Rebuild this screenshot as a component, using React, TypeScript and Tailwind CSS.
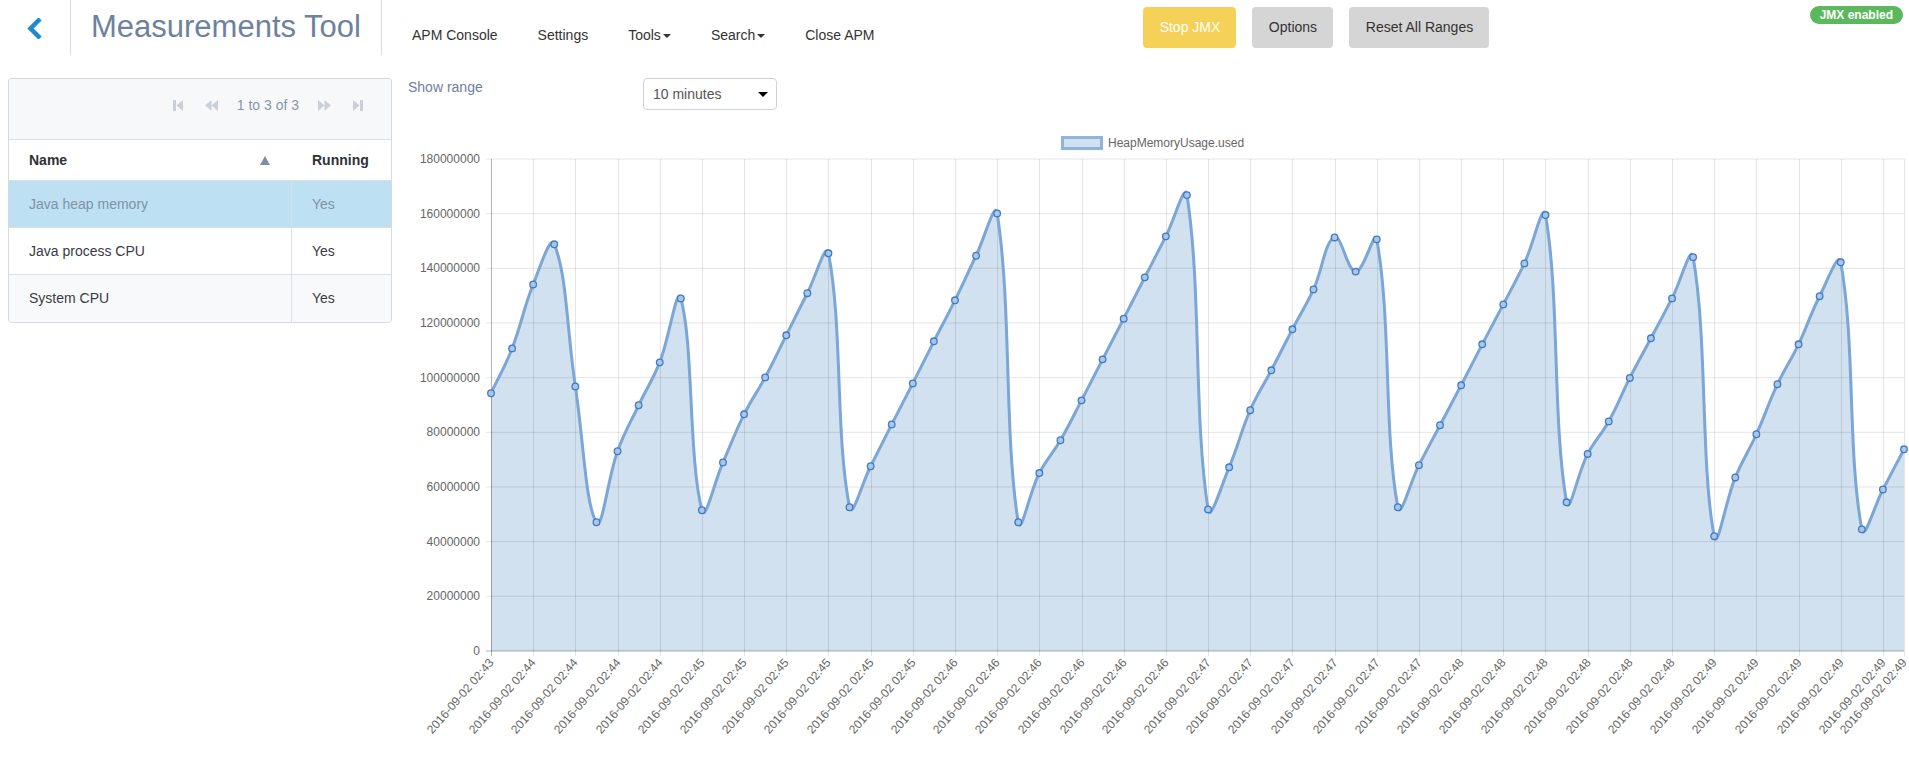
import React from 'react';

// HeapMemoryUsage.used in millions, one sample every 5 seconds
const VALUES = [
  94.3, 110.7, 134.1, 148.8, 96.8, 47.1, 73.1, 89.9, 105.6, 129.0, 51.5, 69.0, 86.6, 100.1, 115.5, 130.9, 145.5,
  52.6, 67.6, 82.9, 97.9, 113.3, 128.3, 144.6, 160.1, 47.1, 65.1, 77.1, 91.7, 106.7, 121.6, 136.7, 151.7, 166.8,
  51.8, 67.2, 88.1, 102.7, 117.7, 132.3, 151.3, 138.8, 150.6, 52.6, 68.0, 82.6, 97.2, 112.2, 126.8, 141.8, 159.5,
  54.4, 72.1, 84.0, 99.9, 114.4, 129.0, 144.1, 42.0, 63.5, 79.3, 97.6, 112.2, 129.8, 142.2, 44.5, 59.1, 73.8,
];

const MINUTES = [
  '43',
  '44', '44', '44', '44',
  '45', '45', '45', '45', '45', '45',
  '46', '46', '46', '46', '46', '46',
  '47', '47', '47', '47', '47', '47',
  '48', '48', '48', '48', '48', '48',
  '49', '49', '49', '49', '49', '49',
];

const LEFT = 491;
const RIGHT = 1904;
const TOP = 159;
const BOTTOM = 651;
const MAX = 180;
const STEP = (RIGHT - LEFT) / (VALUES.length - 1);

type Pt = { x: number; y: number };

function splineCurve(p0: Pt, p1: Pt, p2: Pt, t: number) {
  const d01 = Math.hypot(p1.x - p0.x, p1.y - p0.y);
  const d12 = Math.hypot(p2.x - p1.x, p2.y - p1.y);
  let s01 = d01 / (d01 + d12);
  let s12 = d12 / (d01 + d12);
  if (isNaN(s01)) s01 = 0;
  if (isNaN(s12)) s12 = 0;
  const fa = t * s01;
  const fb = t * s12;
  return {
    prev: { x: p1.x - fa * (p2.x - p0.x), y: p1.y - fa * (p2.y - p0.y) },
    next: { x: p1.x + fb * (p2.x - p0.x), y: p1.y + fb * (p2.y - p0.y) },
  };
}

const cap = (p: Pt): Pt => ({
  x: Math.min(RIGHT, Math.max(LEFT, p.x)),
  y: Math.min(BOTTOM, Math.max(TOP, p.y)),
});

function buildPath() {
  const pts: Pt[] = VALUES.map((v, i) => ({ x: LEFT + i * STEP, y: BOTTOM - (v / MAX) * (BOTTOM - TOP) }));
  const ctrl = pts.map((p, i) => {
    const c = splineCurve(pts[i - 1] || p, p, pts[i + 1] || p, 0.4);
    return { prev: cap(c.prev), next: cap(c.next) };
  });
  let d = `M${pts[0].x},${pts[0].y}`;
  for (let i = 1; i < pts.length; i++) {
    const a = ctrl[i - 1].next;
    const b = ctrl[i].prev;
    d += ` C${a.x},${a.y} ${b.x},${b.y} ${pts[i].x},${pts[i].y}`;
  }
  return { pts, d };
}

function HeapChart() {
  const { pts, d } = buildPath();
  const area = `${d} L${RIGHT},${BOTTOM} L${LEFT},${BOTTOM} Z`;
  const yTicks = [0, 20, 40, 60, 80, 100, 120, 140, 160, 180];
  const labelIdx = [...Array.from({ length: 34 }, (_, k) => k * 2), 67];

  return (
    <svg width={1511} height={662} viewBox="398 120 1511 662" className="block" style={{ fontFamily: '"Liberation Sans", Arial, sans-serif' }}>
      {/* legend */}
      <rect x={1062.5} y={137.5} width={39} height={11} fill="#d2e1f0" stroke="#8fb3db" strokeWidth={3} />
      <text x={1108} y={147} fontSize={12} fill="#666">HeapMemoryUsage.used</text>

      {/* area */}
      <path d={area} fill="#d2e1f0" />

      {/* horizontal grid + y labels */}
      {yTicks.map((t) => {
        const y = BOTTOM - (t / MAX) * (BOTTOM - TOP);
        return (
          <g key={t}>
            <line x1={486} x2={RIGHT} y1={y} y2={y} stroke={t === 0 ? 'rgba(0,0,0,0.3)' : 'rgba(0,0,0,0.1)'} strokeWidth={1} />
            <text x={480} y={y + 4} fontSize={12} fill="#666" textAnchor="end">{t === 0 ? '0' : `${t}000000`}</text>
          </g>
        );
      })}

      {/* vertical grid + x labels */}
      {labelIdx.map((i, k) => {
        const x = Math.round(LEFT + i * STEP) + 0.5;
        return (
          <g key={i}>
            <line x1={x} x2={x} y1={TOP} y2={BOTTOM + 5} stroke={i === 0 ? 'rgba(0,0,0,0.3)' : 'rgba(0,0,0,0.1)'} strokeWidth={1} />
            <text
              fontSize={12}
              fill="#666"
              textAnchor="end"
              transform={`translate(${x + 3},${BOTTOM + 12}) rotate(-49)`}
            >
              2016-09-02 02:{MINUTES[k]}
            </text>
          </g>
        );
      })}

      {/* line */}
      <path d={d} fill="none" stroke="#7ba6d6" strokeWidth={3} />
      {pts.map((p, i) => (
        <circle key={i} cx={p.x} cy={p.y} r={3.3} fill="#a9c6e6" stroke="#3f7cc3" strokeWidth={1.3} />
      ))}
    </svg>
  );
}

function PagerIcon({ kind }: { kind: 'first' | 'prev' | 'next' | 'last' }) {
  const c = '#c9d0d8';
  if (kind === 'first')
    return (
      <svg width="10" height="11" viewBox="0 0 10 11">
        <rect x="0" y="0" width="3" height="11" fill={c} />
        <path d="M10 0 L3.5 5.5 L10 11 Z" fill={c} />
      </svg>
    );
  if (kind === 'last')
    return (
      <svg width="10" height="11" viewBox="0 0 10 11">
        <rect x="7" y="0" width="3" height="11" fill={c} />
        <path d="M0 0 L6.5 5.5 L0 11 Z" fill={c} />
      </svg>
    );
  if (kind === 'prev')
    return (
      <svg width="13" height="11" viewBox="0 0 13 11">
        <path d="M6.5 0 L0 5.5 L6.5 11 Z M13 0 L6.5 5.5 L13 11 Z" fill={c} />
      </svg>
    );
  return (
    <svg width="13" height="11" viewBox="0 0 13 11">
      <path d="M0 0 L6.5 5.5 L0 11 Z M6.5 0 L13 5.5 L6.5 11 Z" fill={c} />
    </svg>
  );
}

const rows = [
  { name: 'Java heap memory', running: 'Yes', selected: true },
  { name: 'Java process CPU', running: 'Yes' },
  { name: 'System CPU', running: 'Yes', striped: true },
];

function Caret() {
  return <span className="ml-[2px] inline-block w-0 h-0 border-l-[4px] border-r-[4px] border-t-[4px] border-l-transparent border-r-transparent border-t-[#333] align-middle" />;
}

export default function App() {
  return (
    <div className="w-[1909px] h-[782px] bg-white overflow-hidden text-[#333]" style={{ fontFamily: '"Liberation Sans", Arial, sans-serif' }}>
      <header className="flex h-[55px]">
        <div className="w-[71px] flex items-center justify-center border-r border-[#dcdcdc]">
          <svg width="16" height="21" viewBox="0 0 16 21" className="ml-[-2px] mt-[1px]">
            <path d="M12.5 2.5 L4.5 10.5 L12.5 18.5" fill="none" stroke="#1b8bd6" strokeWidth="4.5" strokeLinecap="square" />
          </svg>
        </div>
        <div className="w-[311px] border-r border-[#dcdcdc] pl-[20px] pt-[9px]">
          <h1 className="text-[31px] leading-[36px] text-[#6d829e] font-normal">Measurements Tool</h1>
        </div>
        <nav className="flex ml-[10px] pt-[26px] text-[14px] leading-[18px] text-[#333]">
          <span className="px-[20px]">APM Console</span>
          <span className="px-[20px]">Settings</span>
          <span className="px-[20px]">Tools<Caret /></span>
          <span className="px-[20px]">Search<Caret /></span>
          <span className="px-[20px]">Close APM</span>
        </nav>
        <div className="flex gap-[16px] ml-[249px] mt-[7px] self-start text-[14px]">
          <button className="h-[41px] w-[93px] rounded-[4px] bg-[#f6d157] text-white">Stop JMX</button>
          <button className="h-[41px] w-[81px] rounded-[4px] bg-[#d5d5d5] text-[#333]">Options</button>
          <button className="h-[41px] w-[140px] rounded-[4px] bg-[#d5d5d5] text-[#333]">Reset All Ranges</button>
        </div>
        <div className="ml-auto mr-[6px] mt-[6px] self-start h-[18px] px-[10px] rounded-full bg-[#5cb85c] text-white text-[12px] font-bold leading-[18px]">
          JMX enabled
        </div>
      </header>

      <main className="flex mt-[23px]">
        <div className="ml-[8px] w-[384px] self-start border border-[#d7dbe0] rounded-[3px] overflow-hidden text-[14px]">
          <div className="h-[61px] bg-[#f7f8fa] border-b border-[#dcdfe3] flex items-start justify-end pr-[28px] pt-[17px]">
            <div className="flex items-center h-[18px] text-[#8a96a5]">
              <PagerIcon kind="first" />
              <span className="ml-[22px]"><PagerIcon kind="prev" /></span>
              <span className="ml-[19px] text-[14px] leading-[18px]">1 to 3 of 3</span>
              <span className="ml-[19px]"><PagerIcon kind="next" /></span>
              <span className="ml-[22px]"><PagerIcon kind="last" /></span>
            </div>
          </div>
          <div className="flex h-[41px] items-center border-b border-[#dcdfe3] font-bold text-[#2f3136]">
            <div className="w-[283px] pl-[20px] pr-[22px] flex items-center justify-between">
              <span>Name</span>
              <svg width="10" height="9" viewBox="0 0 10 9"><path d="M5 0 L10 9 L0 9 Z" fill="#7d8fa3" /></svg>
            </div>
            <div className="pl-[20px]">Running</div>
          </div>
          {rows.map((r, i) => (
            <div
              key={r.name}
              className={`flex h-[47px] items-center ${i < rows.length - 1 ? 'border-b border-[#dcdfe3]' : ''} ${
                r.selected ? 'bg-[#bde0f2] text-[#8192a6]' : r.striped ? 'bg-[#f8f9fa] text-[#383b44]' : 'bg-white text-[#383b44]'
              }`}
            >
              <div className="w-[283px] h-full flex items-center pl-[20px] border-r border-[#dcdfe3]">{r.name}</div>
              <div className="pl-[20px]">{r.running}</div>
            </div>
          ))}
        </div>

        <div className="ml-[6px] flex-1 flex flex-col">
          <div className="flex items-start h-[32px] text-[14px]">
            <span className="w-[245px] pl-[10px] leading-[18px] text-[#6d829e]">Show range</span>
            <div className="w-[134px] h-[32px] border border-[#cfd3d8] rounded-[4px] flex items-center justify-between pl-[9px] pr-[8px] text-[#555]">
              <span>10 minutes</span>
              <span className="inline-block w-0 h-0 border-l-[5px] border-r-[5px] border-t-[5px] border-l-transparent border-r-transparent border-t-black" />
            </div>
          </div>
          <div className="mt-[10px]">
            <HeapChart />
          </div>
        </div>
      </main>
    </div>
  );
}
